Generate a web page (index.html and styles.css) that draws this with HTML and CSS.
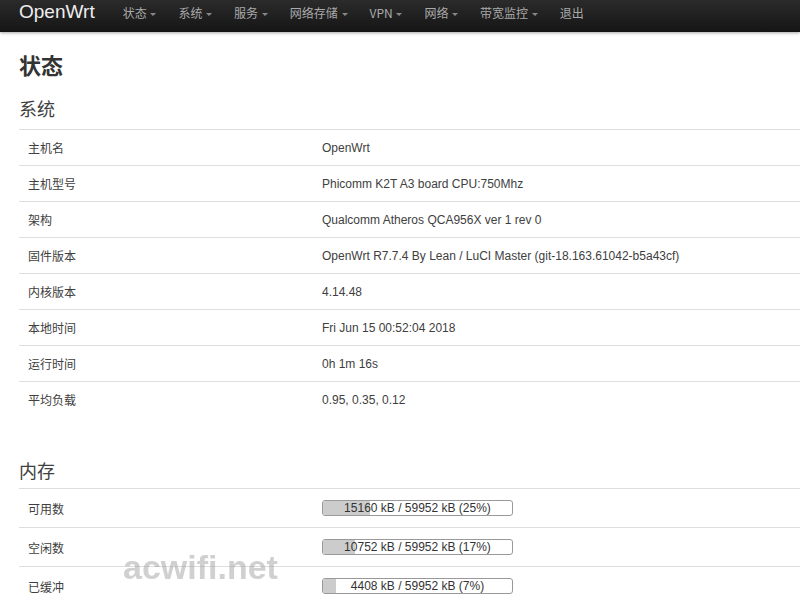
FILE: index.html
```html
<!DOCTYPE html>
<html lang="zh-CN">
<head>
    <meta charset="UTF-8">
    <meta name="viewport" content="width=device-width, initial-scale=1.0">
    <title>OpenWrt - 状态</title>
    <link rel="stylesheet" href="styles.css">
</head>
<body>
    <header class="navbar">
        <a class="brand" href="#">OpenWrt</a>
        <ul class="nav">
            <li><a href="#">状态 <span class="caret"></span></a></li>
            <li><a href="#">系统 <span class="caret"></span></a></li>
            <li><a href="#">服务 <span class="caret"></span></a></li>
            <li><a href="#">网络存储 <span class="caret"></span></a></li>
            <li><a href="#">VPN <span class="caret"></span></a></li>
            <li><a href="#">网络 <span class="caret"></span></a></li>
            <li><a href="#">带宽监控 <span class="caret"></span></a></li>
            <li><a href="#">退出</a></li>
        </ul>
    </header>

    <div class="container">
        <h2>状态</h2>

        <div class="cbi-section">
            <h3>系统</h3>
            <table class="cbi-table">
                <tr><td class="label">主机名</td><td>OpenWrt</td></tr>
                <tr><td class="label">主机型号</td><td>Phicomm K2T A3 board CPU:750Mhz</td></tr>
                <tr><td class="label">架构</td><td>Qualcomm Atheros QCA956X ver 1 rev 0</td></tr>
                <tr><td class="label">固件版本</td><td>OpenWrt R7.7.4 By Lean / LuCI Master (git-18.163.61042-b5a43cf)</td></tr>
                <tr><td class="label">内核版本</td><td>4.14.48</td></tr>
                <tr><td class="label">本地时间</td><td>Fri Jun 15 00:52:04 2018</td></tr>
                <tr><td class="label">运行时间</td><td>0h 1m 16s</td></tr>
                <tr><td class="label">平均负载</td><td>0.95, 0.35, 0.12</td></tr>
            </table>
        </div>

        <div class="cbi-section">
            <h3>内存</h3>
            <table class="cbi-table mem">
                <tr>
                    <td class="label">可用数</td>
                    <td><div class="progress"><div class="bar" style="width:25%"></div><span>15160 kB / 59952 kB (25%)</span></div></td>
                </tr>
                <tr>
                    <td class="label">空闲数</td>
                    <td><div class="progress"><div class="bar" style="width:17%"></div><span>10752 kB / 59952 kB (17%)</span></div></td>
                </tr>
                <tr>
                    <td class="label">已缓冲</td>
                    <td><div class="progress"><div class="bar" style="width:7%"></div><span>4408 kB / 59952 kB (7%)</span></div></td>
                </tr>
            </table>
        </div>
    </div>

    <div class="watermark">acwifi.net</div>
</body>
</html>
```

FILE: styles.css
```css
body {
    font-family: "Liberation Sans", Arial, "Noto Sans CJK SC", sans-serif;
    font-size: 12px;
    color: #404040;
    background: #fff;
    margin: 0;
    overflow: hidden;
}
.navbar {
    display: flex;
    align-items: center;
    height: 32px;
    padding-left: 19px;
    background: linear-gradient(#2b2b2b, #151515);
    box-shadow: 0 1px 3px rgba(0, 0, 0, 0.35);
}
.brand {
    font-size: 19px;
    color: #eee;
    text-decoration: none;
    margin-top: -8px;
    margin-right: 28px;
}
.nav {
    display: flex;
    list-style: none;
    margin: 0;
    padding: 0;
    margin-top: -7px;
}
.nav li {
    margin-right: 22px;
}
.nav a {
    color: #aaa;
    text-decoration: none;
    font-size: 12px;
    font-family: "Noto Sans CJK SC", sans-serif;
}
.caret {
    display: inline-block;
    width: 0;
    height: 0;
    vertical-align: middle;
    border-left: 3px solid transparent;
    border-right: 3px solid transparent;
    border-top: 3px solid #888;
    margin-left: 1px;
}
.container {
    padding-left: 19px;
}
h2 {
    font-size: 22px;
    font-weight: bold;
    color: #333;
    margin: 20px 0 0;
    line-height: 30px;
}
.cbi-section h3 {
    font-size: 18px;
    font-weight: normal;
    color: #404040;
    line-height: 26px;
    margin: 15px 0 6px;
}
.cbi-section + .cbi-section h3 {
    margin: 42px 0 3px;
}
.cbi-table {
    width: 100%;
    border-collapse: collapse;
}
.cbi-table td {
    border-top: 1px solid #ddd;
    height: 35px;
    padding: 0 9px;
    vertical-align: middle;
}
.cbi-table td.label {
    width: 276px;
}
.mem td {
    height: 38px;
}
.progress {
    position: relative;
    width: 189px;
    height: 14px;
    border: 1px solid #999;
    border-radius: 3px;
    background: #fff;
    overflow: hidden;
    text-align: center;
}
.progress .bar {
    position: absolute;
    left: 0;
    top: 0;
    bottom: 0;
    background: #ccc;
}
.progress span {
    position: relative;
    line-height: 14px;
    font-size: 12px;
    color: #333;
}
.watermark {
    position: absolute;
    left: 123px;
    top: 548px;
    font-size: 34px;
    font-weight: bold;
    font-family: "Liberation Sans", Arial, sans-serif;
    color: rgba(150, 150, 150, 0.45);
    filter: blur(0.6px);
}
```
